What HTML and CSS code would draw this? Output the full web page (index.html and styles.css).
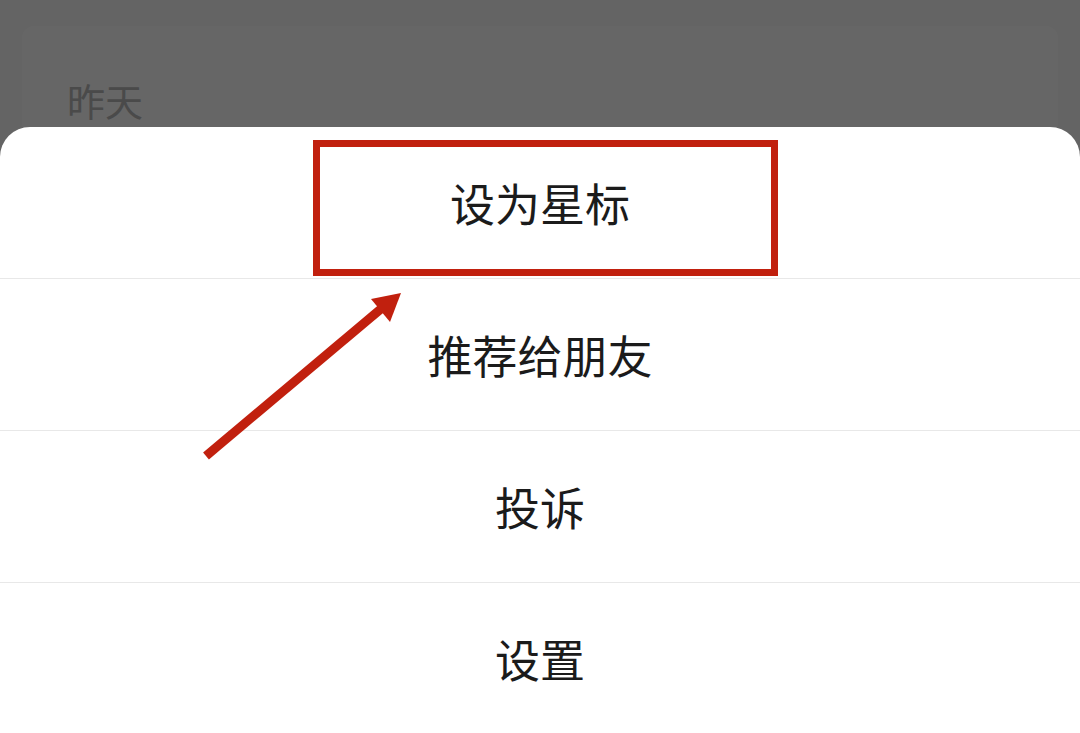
FILE: index.html
```html
<!DOCTYPE html>
<html lang="zh-CN">
<head>
    <meta charset="UTF-8">
    <title>设为星标</title>
    <link rel="stylesheet" href="styles.css">
</head>
<body>
    <div class="page">
        <div class="card">
            <div class="day">昨天</div>
        </div>
    </div>
    <div class="mask"></div>
    <div class="sheet">
        <div class="item">设为星标</div>
        <div class="item">推荐给朋友</div>
        <div class="item">投诉</div>
        <div class="item">设置</div>
    </div>
    <div class="mark"></div>
    <svg class="arrow" width="1080" height="733" viewBox="0 0 1080 733">
        <line x1="206" y1="456" x2="382" y2="308" stroke="#c1200e" stroke-width="9"/>
        <polygon points="401,293 371,299 390,322" fill="#c1200e"/>
    </svg>
</body>
</html>
```

FILE: styles.css
```css
body {
    margin: 0;
    width: 1080px;
    height: 733px;
    overflow: hidden;
    position: relative;
    background: #fafafa;
    font-family: "Noto Sans CJK SC", "Noto Sans", sans-serif;
}
.page {
    padding: 26px 22px 0;
}
.card {
    background: #fff;
    border-radius: 12px;
    height: 700px;
    padding: 0 45px;
}
.day {
    padding-top: 52px;
    font-size: 38px;
    line-height: 44px;
    color: #b8b8b8;
}
.mask {
    position: absolute;
    inset: 0;
    background: rgba(0, 0, 0, 0.6);
}
.sheet {
    position: absolute;
    left: 0;
    right: 0;
    top: 127px;
    bottom: 0;
    background: #fff;
    border-radius: 30px 30px 0 0;
    display: flex;
    flex-direction: column;
}
.item {
    height: 151px;
    flex: none;
    display: flex;
    align-items: center;
    justify-content: center;
    font-size: 45px;
    color: #1b1b1b;
    border-bottom: 1px solid #e8e8e8;
}
.item:last-child {
    border-bottom: none;
}
.mark {
    position: absolute;
    left: 313px;
    top: 140px;
    width: 451px;
    height: 122px;
    border: 7px solid #c1200e;
}
.arrow {
    position: absolute;
    left: 0;
    top: 0;
}
```
